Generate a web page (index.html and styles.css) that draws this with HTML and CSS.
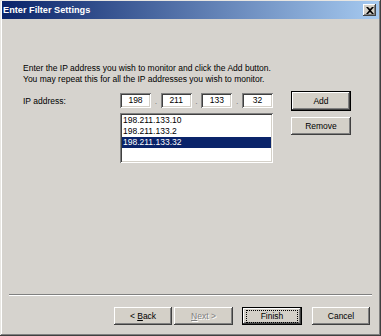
FILE: index.html
```html
<!DOCTYPE html>
<html>
<head>
<meta charset="utf-8">
<link rel="stylesheet" href="styles.css">
</head>
<body>
<div class="window">
  <div class="titlebar">
    <span class="title">Enter Filter Settings</span>
    <span class="close">
      <svg width="8" height="7" viewBox="0 0 8 7"><path d="M0 0h2l2 2 2-2h2L5 3.5 8 7H6L4 5 2 7H0l3-3.5z" fill="#000"/></svg>
    </span>
  </div>
  <div class="content">
    <p class="intro">Enter the IP address you wish to monitor and click the Add button.<br>You may repeat this for all the IP addresses you wish to monitor.</p>
    <div class="form">
      <div class="label">IP address:</div>
      <div class="ip">
        <span class="octet">198</span><span class="dot">.</span>
        <span class="octet">211</span><span class="dot">.</span>
        <span class="octet">133</span><span class="dot">.</span>
        <span class="octet">32</span>
      </div>
      <div></div>
      <button class="btn default add">Add</button>
      <div></div>
      <div class="listbox">
        <div class="item">198.211.133.10</div>
        <div class="item">198.211.133.2</div>
        <div class="item selected">198.211.133.32</div>
      </div>
      <div></div>
      <button class="btn remove">Remove</button>
    </div>
  </div>
  <div class="separator"></div>
  <div class="footer">
    <button class="btn nav">&lt; <u>B</u>ack</button>
    <button class="btn nav disabled"><u>N</u>ext &gt;</button>
    <button class="btn nav default finish"><span class="focus">Finish</span></button>
    <button class="btn nav cancel">Cancel</button>
  </div>
</div>
</body>
</html>
```
FILE: styles.css
```css
html, body {
  margin: 0;
  padding: 0;
  background: #d4d0c8;
}
body {
  font-family: "Liberation Sans", Arial, sans-serif;
  font-size: 8.5px;
  color: #000;
}
.window {
  width: 381px;
  height: 336px;
  box-sizing: border-box;
  background: #d6d3ce;
  padding: 1px 2px 2px 2px;
  box-shadow: inset -1px -1px #404040, inset 1px 1px #e8e6e2, inset -2px -2px #808080, inset 2px 2px #ffffff;
  display: flex;
  flex-direction: column;
}
.titlebar {
  height: 18px;
  background: linear-gradient(to right, #0a246a, #a6caf0);
  display: flex;
  align-items: center;
  justify-content: space-between;
  padding: 0 3px 0 1px;
}
.title {
  color: #fff;
  font-weight: bold;
  font-size: 9.2px;
}
.close {
  width: 13px;
  height: 12px;
  background: #d4d0c8;
  box-shadow: inset -1px -1px #404040, inset 1px 1px #fff, inset -2px -2px #808080;
  display: flex;
  align-items: center;
  justify-content: center;
}
.content {
  flex: 1;
  padding: 44px 0 0 21px;
}
.intro {
  margin: 0;
  line-height: 11px;
}
.form {
  margin-top: 6px;
  display: grid;
  grid-template-columns: 97px 153px 18px 60px;
  row-gap: 2px;
  align-items: start;
}
.label {
  margin-top: 5px;
}
.ip {
  margin-top: 2px;
  display: flex;
  align-items: center;
  justify-content: space-between;
  height: 15px;
}
.octet {
  width: 31px;
  height: 15px;
  box-sizing: border-box;
  background: #fff;
  box-shadow: inset 1px 1px #808080, inset -1px -1px #fff, inset 2px 2px #404040, inset -2px -2px #d4d0c8;
  text-align: center;
  line-height: 15px;
}
.dot {
  width: 9px;
  text-align: center;
  color: #808080;
}
.btn {
  font-family: inherit;
  font-size: 8.5px;
  color: #000;
  background: #d4d0c8;
  border: none;
  padding: 0;
  margin: 0;
  height: 18px;
  box-shadow: inset -1px -1px #404040, inset 1px 1px #fff, inset -2px -2px #808080;
}
.btn.default {
  box-shadow: inset 0 0 0 1px #000, inset -2px -2px #404040, inset 2px 2px #fff, inset -3px -3px #808080;
}
.add {
  width: 60px;
  height: 20px;
}
.remove {
  width: 60px;
  margin-top: 4px;
}
.listbox {
  height: 50px;
  box-sizing: border-box;
  background: #fff;
  padding: 2px;
  box-shadow: inset 1px 1px #808080, inset -1px -1px #fff, inset 2px 2px #404040, inset -2px -2px #d4d0c8;
}
.item {
  height: 11px;
  line-height: 11px;
  padding-left: 1px;
}
.item.selected {
  background: #0a246a;
  color: #fff;
}
.separator {
  height: 1px;
  margin: 0 7px;
  background: #808080;
  border-bottom: 1px solid #fff;
}
.footer {
  display: flex;
  padding: 11px 0 9px 112px;
}
.nav {
  width: 58px;
}
.disabled {
  color: #808080;
  text-shadow: 1px 1px #fff;
  margin-left: 2px;
  width: 59px;
}
.finish {
  margin-left: 9px;
  width: 60px;
}
.focus {
  display: inline-block;
  outline: 1px dotted #000;
  width: 50px;
  line-height: 11px;
}
.cancel {
  margin-left: 10px;
}
u {
  text-decoration: underline;
}
```
